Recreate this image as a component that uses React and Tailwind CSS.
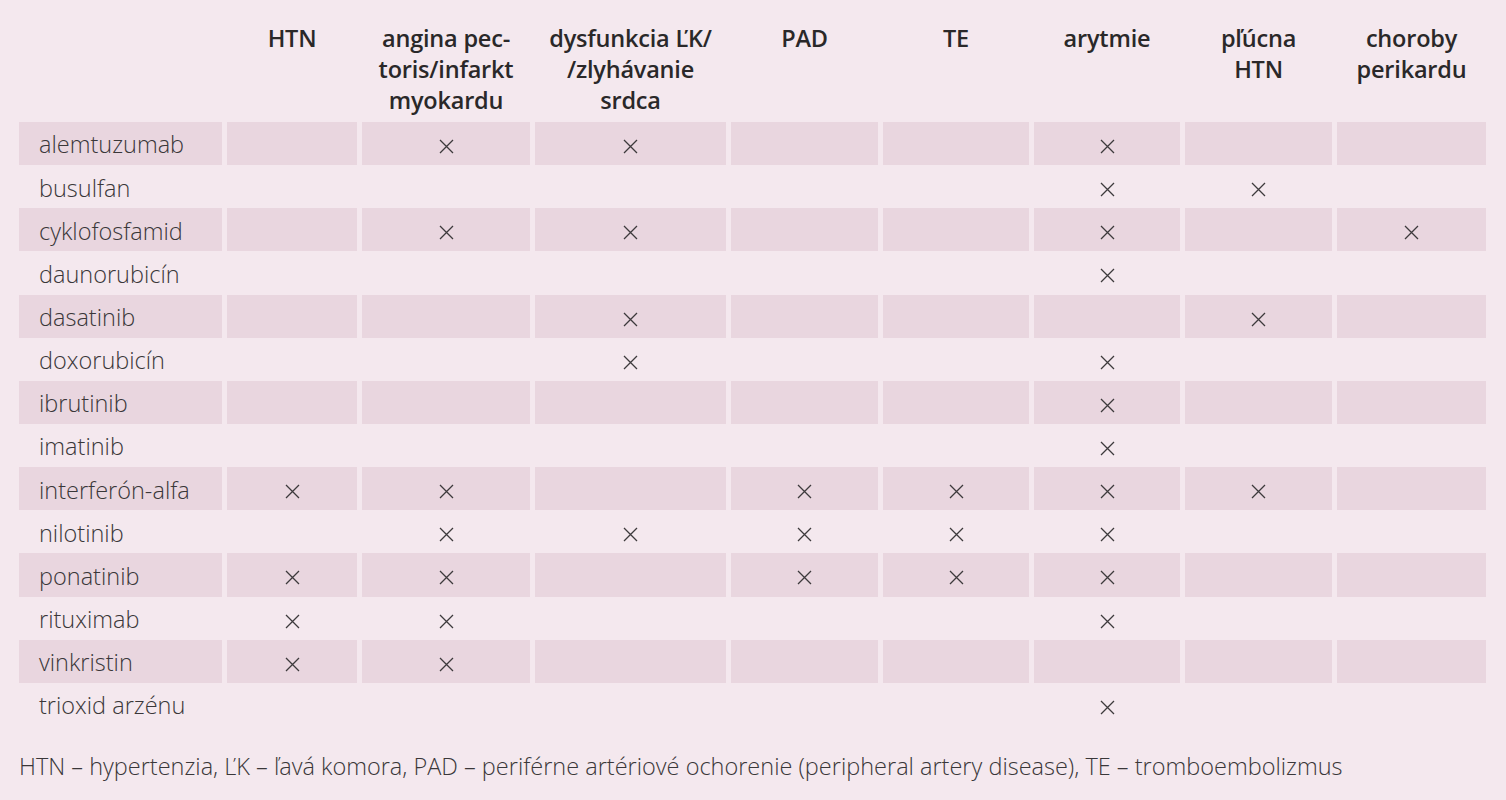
import React from "react";

const cols = ["HTN", "angina pec-\ntoris/infarkt\nmyokardu", "dysfunkcia ĽK/\n/zlyhávanie\nsrdca", "PAD", "TE", "arytmie", "pľúcna\nHTN", "choroby\nperikardu"];

const rows = [
  ["alemtuzumab", [0, 1, 1, 0, 0, 1, 0, 0]],
  ["busulfan", [0, 0, 0, 0, 0, 1, 1, 0]],
  ["cyklofosfamid", [0, 1, 1, 0, 0, 1, 0, 1]],
  ["daunorubicín", [0, 0, 0, 0, 0, 1, 0, 0]],
  ["dasatinib", [0, 0, 1, 0, 0, 0, 1, 0]],
  ["doxorubicín", [0, 0, 1, 0, 0, 1, 0, 0]],
  ["ibrutinib", [0, 0, 0, 0, 0, 1, 0, 0]],
  ["imatinib", [0, 0, 0, 0, 0, 1, 0, 0]],
  ["interferón-alfa", [1, 1, 0, 1, 1, 1, 1, 0]],
  ["nilotinib", [0, 1, 1, 1, 1, 1, 0, 0]],
  ["ponatinib", [1, 1, 0, 1, 1, 1, 0, 0]],
  ["rituximab", [1, 1, 0, 0, 0, 1, 0, 0]],
  ["vinkristin", [1, 1, 0, 0, 0, 0, 0, 0]],
  ["trioxid arzénu", [0, 0, 0, 0, 0, 1, 0, 0]],
];

function Cross() {
  return (
    <svg width="15" height="15" viewBox="0 0 15 15" className="block">
      <path d="M1 1 L14 14 M14 1 L1 14" stroke="#3d3a3c" strokeWidth="1.3" fill="none" />
    </svg>
  );
}

export default function App() {
  return (
    <div
      className="w-[1506px] h-[800px] bg-[#f4e8ee] text-[#2f2d2e] overflow-hidden"
      style={{ fontFamily: '"Open Sans", "Noto Sans", sans-serif' }}
    >
      <div className="pl-[19px] pt-[23px]">
        <div className="grid grid-cols-[203px_130px_168px_191px_147px_146px_146px_147px_149px] gap-x-[5px]">
          <div className="h-[99px]" />
          {cols.map((c, i) => (
            <div
              key={i}
              className="h-[99px] text-center font-semibold text-[23.5px] leading-[31px] text-[#2a2829] whitespace-pre tracking-[-0.2px]"
            >
              {c}
            </div>
          ))}
          {rows.map(([name, marks], r) => {
            const shade = r % 2 === 0 ? "bg-[#e9d6df]" : "";
            return (
              <React.Fragment key={name}>
                <div className={`h-[43.15px] flex items-center pl-[20px] pt-[3px] text-[23.5px] font-light text-[#3a3739] ${shade}`}>
                  {name}
                </div>
                {marks.map((m, i) => (
                  <div key={i} className={`h-[43.15px] flex items-center justify-center pt-[6px] ${shade}`}>
                    {m ? <Cross /> : null}
                  </div>
                ))}
              </React.Fragment>
            );
          })}
        </div>
        <div className="mt-[25px] text-[23.5px] font-light text-[#3a3739] leading-[30px]">
          HTN – hypertenzia, ĽK – ľavá komora, PAD – periférne artériové ochorenie (peripheral artery disease), TE – tromboembolizmus
        </div>
      </div>
    </div>
  );
}
